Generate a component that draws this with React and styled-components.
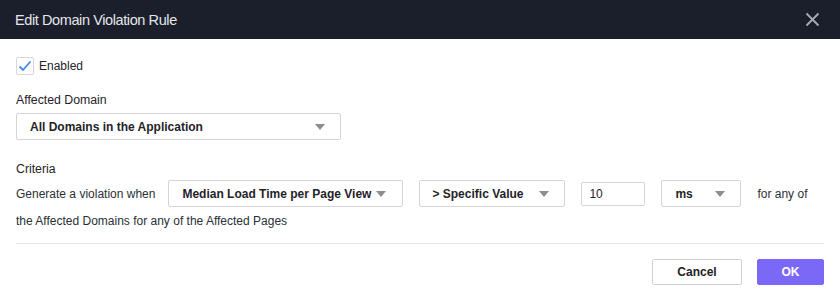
import React from "react";
import styled, { createGlobalStyle } from "styled-components";

const Global = createGlobalStyle`
  html, body { margin: 0; padding: 0; background: #fff; }
  body { font-family: "Liberation Sans", Arial, sans-serif; color: #1f2329; }
  * { box-sizing: border-box; }
`;

const Dialog = styled.div`
  width: 840px;
  height: 300px;
  display: flex;
  flex-direction: column;
  background: #fff;
`;

const Header = styled.div`
  height: 39px;
  background: #1b1f2b;
  display: flex;
  align-items: center;
  justify-content: space-between;
  padding: 0 20px 0 15px;
`;

const Title = styled.div`
  color: #e4e6ea;
  font-size: 14.5px;
  letter-spacing: -0.4px;
  font-weight: 300;
`;

const Close = styled.button`
  background: none;
  border: none;
  padding: 0;
  width: 15px;
  height: 15px;
  display: flex;
  cursor: pointer;
`;

const Body = styled.div`
  padding: 18px 16px 0 16px;
  display: flex;
  flex-direction: column;
`;

const CheckRow = styled.label`
  display: flex;
  align-items: center;
  gap: 5px;
  font-size: 12px;
  height: 18px;
`;

const Box = styled.span`
  width: 18px;
  height: 18px;
  border: 1px solid #d4d6da;
  border-radius: 2px;
  display: flex;
  align-items: center;
  justify-content: center;
`;

const Label = styled.div`
  font-size: 12.3px;
  font-weight: 500;
  color: #1f2329;
  margin-top: ${(p) => p.$mt}px;
  margin-bottom: ${(p) => p.$mb}px;
`;

const Select = styled.div`
  flex-shrink: 0;
  white-space: nowrap;
  width: ${(p) => p.$w}px;
  height: 27px;
  border: 1px solid #d3d5d9;
  border-radius: 2px;
  display: flex;
  align-items: center;
  justify-content: space-between;
  padding: 0 ${(p) => p.$pr}px 0 ${(p) => p.$pl}px;
  font-size: 12px;
  font-weight: 700;
  color: #1f2329;
  background: #fff;
`;

const Caret = styled.span`
  width: 0;
  height: 0;
  border-left: 5px solid transparent;
  border-right: 5px solid transparent;
  border-top: 6px solid #8a8d92;
`;

const CriteriaRow = styled.div`
  display: flex;
  align-items: center;
  gap: 16px;
`;

const Text = styled.span`
  flex-shrink: 0;
  white-space: nowrap;
  font-size: 12px;
  color: #2b2f36;
  margin-right: ${(p) => p.$mr || 0}px;
`;

const Input = styled.input`
  flex-shrink: 0;
  width: 64px;
  height: 24px;
  border: 1px solid #d3d5d9;
  border-radius: 2px;
  font-family: inherit;
  font-size: 12px;
  padding: 0 7px;
  color: #1f2329;
  outline: none;
`;

const SecondLine = styled.div`
  font-size: 12px;
  color: #2b2f36;
  margin-top: 7px;
`;

const Divider = styled.hr`
  border: none;
  border-top: 1px solid #e3e4e6;
  width: 100%;
  margin: 15px 0 15px 0;
`;

const Footer = styled.div`
  display: flex;
  justify-content: flex-end;
  gap: 15px;
`;

const Button = styled.button`
  width: ${(p) => p.$w}px;
  height: 26px;
  border-radius: 2px;
  font-family: inherit;
  font-size: 12px;
  font-weight: 700;
  cursor: pointer;
  border: 1px solid ${(p) => (p.$primary ? "#7b68f6" : "#cfd1d5")};
  background: ${(p) => (p.$primary ? "#7b68f6" : "#fff")};
  color: ${(p) => (p.$primary ? "#fff" : "#1f2329")};
`;

export default function App() {
  return (
    <Dialog>
      <Global />
      <Header>
        <Title>Edit Domain Violation Rule</Title>
        <Close aria-label="close">
          <svg width="15" height="15" viewBox="0 0 15 15">
            <path d="M1.5 1.5 L13.5 13.5 M13.5 1.5 L1.5 13.5" stroke="#a9acb2" strokeWidth="1.8" />
          </svg>
        </Close>
      </Header>
      <Body>
        <CheckRow>
          <Box>
            <svg width="14" height="12" viewBox="0 0 14 12">
              <path d="M1.5 6.5 L5 10 L12.5 1.5" fill="none" stroke="#3d8bf2" strokeWidth="1.8" />
            </svg>
          </Box>
          Enabled
        </CheckRow>
        <Label $mt={18} $mb={6}>Affected Domain</Label>
        <Select $w={325} $pl={13} $pr={15}>
          All Domains in the Application
          <Caret />
        </Select>
        <Label $mt={22} $mb={4}>Criteria</Label>
        <CriteriaRow>
          <Text $mr={-3}>Generate a violation when</Text>
          <Select $w={235} $pl={13} $pr={16}>
            Median Load Time per Page View
            <Caret />
          </Select>
          <Select $w={146} $pl={12} $pr={15}>
            &gt; Specific Value
            <Caret />
          </Select>
          <Input defaultValue="10" />
          <Select $w={80} $pl={13} $pr={15}>
            ms
            <Caret />
          </Select>
          <Text>for any of</Text>
        </CriteriaRow>
        <SecondLine>the Affected Domains for any of the Affected Pages</SecondLine>
        <Divider />
        <Footer>
          <Button $w={90}>Cancel</Button>
          <Button $w={67} $primary>OK</Button>
        </Footer>
      </Body>
    </Dialog>
  );
}
